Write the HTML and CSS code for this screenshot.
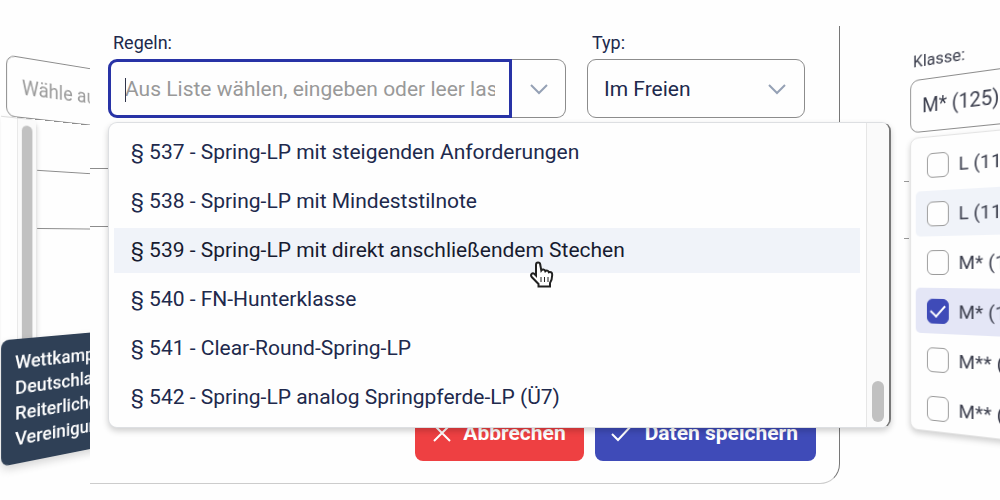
FILE: index.html
```
<!DOCTYPE html>
<html lang="de">
<head>
<meta charset="utf-8">
<title>Prüfung bearbeiten</title>
<link rel="stylesheet" href="styles.css">
</head>
<body>
<main class="stage">
  <section class="side side-left" aria-label="Veranstaltung">
    <div class="plane plane-left">
      <input class="side-field field-list" type="text" placeholder="Wähle aus Liste" aria-label="Veranstaltung">
      <div class="rows-left">
        <div class="list-edge"><div class="edge-track"><div class="edge-thumb"></div></div></div>
        <div class="ruled"></div>
      </div>
      <div class="tooltip" role="tooltip">Wettkampf<br>Deutschland<br>Reiterliche<br>Vereinigung</div>
    </div>
  </section>

  <section class="center">
    <form class="dialog">
      <div class="fields">
        <div class="field">
          <label for="rules">Regeln:</label>
          <div class="combo">
            <input id="rules" class="combo-input" type="text" placeholder="Aus Liste wählen, eingeben oder leer lassen">
            <span class="caret"></span>
            <button class="combo-button" type="button" aria-label="Liste öffnen">
              <svg class="chevron" viewBox="0 0 20 20"><path d="M2 6l8 8 8-8"/></svg>
            </button>
          </div>
        </div>
        <div class="field">
          <label for="type">Typ:</label>
          <div class="select-wrap">
            <select id="type"><option>Im Freien</option><option>Halle</option></select>
            <svg class="chevron select-chevron" viewBox="0 0 20 20"><path d="M2 6l8 8 8-8"/></svg>
          </div>
        </div>
        <div class="menu">
          <ul class="options" role="listbox" aria-label="Regeln">
            <li role="option">§ 537 - Spring-LP mit steigenden Anforderungen</li>
            <li role="option">§ 538 - Spring-LP mit Mindeststilnote</li>
            <li role="option" class="hover">§ 539 - Spring-LP mit direkt anschließendem Stechen</li>
            <li role="option">§ 540 - FN-Hunterklasse</li>
            <li role="option">§ 541 - Clear-Round-Spring-LP</li>
            <li role="option">§ 542 - Spring-LP analog Springpferde-LP (Ü7)</li>
          </ul>
          <div class="track"><div class="thumb"></div></div>
          <svg class="pointer" viewBox="0 0 26 28"><path d="M7 14.500V4c0-3.200 4-3.200 4.300 0l1 5.500c1-1.500 3.300-1.200 4 .7 1.200-1.200 3-.7 3.500 1 2-.8 3.500.3 3.400 2.800-.1 4-.7 6-2.200 8v3.500H9.500V23L3.200 16.500C.5 13.500 3.500 11.300 5.500 13z"/><path class="lines" d="M12 16v5M15.500 16v5M19 16v5"/></svg>
        </div>
      </div>
      <div class="ruled"></div>
      <div class="actions">
        <button class="btn cancel" type="button"><svg viewBox="0 0 18 18"><path d="M1 1l16 16M17 1L1 17"/></svg>Abbrechen</button>
        <button class="btn save" type="button"><svg class="wide" viewBox="0 0 22 20"><path d="M1 11l6 6L21 2"/></svg>Daten speichern</button>
      </div>
    </form>
  </section>

  <section class="side side-right" aria-label="Klasse">
    <div class="plane plane-right">
      <label class="side-label" for="class">Klasse:</label>
      <input id="class" class="side-field class-field" type="text" value="M* (125)">
      <div class="checks">
        <label><input type="checkbox">L (115)</label>
        <label class="hover"><input type="checkbox">L (115)</label>
        <label><input type="checkbox">M* (125)</label>
        <label class="picked"><input type="checkbox" checked>M* (125)</label>
        <label><input type="checkbox">M** (135)</label>
        <label><input type="checkbox">M** (135)</label>
      </div>
    </div>
  </section>
</main>
</body>
</html>
```
FILE: styles.css
```
* { box-sizing: border-box; }

body {
  margin: 0;
  background: #fefefe;
  color: #20294c;
  font-family: Roboto, "Liberation Sans", sans-serif;
  font-size: 21px;
  overflow: hidden;
}

input, select, button { font: inherit; color: inherit; margin: 0; }

.stage {
  display: grid;
  grid-template-columns: 90px minmax(0, 1fr) 96px;
  min-height: 100vh;
}

/* side panels turned away in perspective */
.side { overflow: hidden; perspective: 400px; perspective-origin: 40px 240px; }
.side-right { perspective-origin: 40px 270px; }
.plane { position: relative; width: 160px; height: 100%; transform-origin: 40px 240px; }
.plane-left { transform: rotateY(20deg); padding: 60px 0 0 5px; }
.plane-right {
  transform: rotateY(-16deg);
  transform-origin: 40px 270px;
  padding: 44px 0 0 4px;
  color: #3a3d4c;
}

.side-field {
  display: block;
  width: 100%;
  height: 60px;
  padding: 0 15px;
  background: #fefefe;
  border: 1px solid #8c8c8c;
  border-radius: 9px;
  font-size: 20px;
}
.side-field::placeholder { color: #9b9b9b; opacity: 1; }

.rows-left { display: flex; height: 260px; margin-left: -5px; }
.list-edge {
  width: 37px;
  border-top: 1px solid #dddddd;
  border-right: 1px solid #e2e2e2;
  border-top-right-radius: 8px;
  box-shadow: 1px 2px 4px #00000018;
  display: flex;
  justify-content: flex-end;
}
.edge-track { width: 20px; border-left: 1px solid #e8e8e8; background: #fafafa; padding: 6px 4px 0; }
.edge-thumb { height: 100%; border-radius: 6px; background: #c1c1c1; }

.ruled {
  flex: 1;
  height: 59px;
  margin-top: 50px;
  border-top: 1px solid #8c8c8c;
  border-bottom: 1px solid #8c8c8c;
}

.tooltip {
  position: absolute;
  top: 337px;
  left: 0;
  width: 100%;
  padding: 10px 14px 12px;
  border-radius: 8px;
  background: #2f4056;
  color: #ffffff;
  font-size: 19px;
  font-weight: 500;
  line-height: 25px;
  box-shadow: 0 4px 8px #00000028;
}

.center { min-width: 0; }
.dialog {
  display: flex;
  flex-direction: column;
  margin: 26px 64px 0 0;
  padding-bottom: 22px;
  border: solid #777777;
  border-width: 0 1px 1px 0;
  border-bottom-color: #cccccc;
  border-bottom-right-radius: 20px;
}
.fields {
  position: relative;
  display: grid;
  grid-template-columns: minmax(0, 458px) minmax(0, 218px);
  justify-content: space-between;
  padding: 4px 34px 0 18px;
}
.field { display: flex; flex-direction: column; gap: 4px; }
.field label { font-size: 18px; line-height: 25px; padding-left: 5px; }

.combo { position: relative; display: flex; height: 59px; }
.combo-input {
  flex: 1;
  min-width: 0;
  padding: 0 14px;
  border: 3px solid #2833a6;
  border-radius: 9px 0 0 9px;
  background: #fefefe;
  outline: 0;
}
.combo-input::placeholder { color: #999999; opacity: 1; }
.caret { position: absolute; left: 17px; top: 19px; width: 1px; height: 24px; background: #30344a; }
.combo-button {
  display: grid;
  place-items: center;
  width: 54px;
  padding: 0;
  background: #fefefe;
  border: 1px solid #8c8c8c;
  border-left: 0;
  border-radius: 0 9px 9px 0;
}
.chevron { width: 20px; height: 20px; fill: none; stroke: #95a1b5; stroke-width: 2; }

.select-wrap { position: relative; }
select {
  display: block;
  width: 100%;
  height: 59px;
  padding: 0 50px 0 16px;
  appearance: none;
  background: #fefefe;
  border: 1px solid #8c8c8c;
  border-radius: 9px;
}
.select-chevron { position: absolute; right: 18px; top: 20px; pointer-events: none; }

.menu {
  position: absolute;
  z-index: 2;
  top: calc(100% + 4px);
  left: 18px;
  right: -52px;
  display: flex;
  background: #fefefe;
  border: 1px solid #dddfe2;
  border-right: 2px solid #777777;
  border-radius: 9px;
  box-shadow: 0 3px 6px #00000030;
}
.options {
  flex: 1;
  display: flex;
  flex-direction: column;
  gap: 4px;
  margin: 0;
  padding: 7px 6px 7px 5px;
  list-style: none;
}
.options li { padding: 0 17px; line-height: 45px; white-space: nowrap; }
.options .hover { background: #f0f3f9; color: #171b30; }
.track {
  display: flex;
  align-items: flex-end;
  width: 23px;
  padding: 5px;
  background: #fafafa;
  border-left: 1px solid #e6e6e6;
  border-radius: 0 8px 8px 0;
}
.thumb { width: 12px; height: 41px; border-radius: 6px; background: #c1c1c1; }
.pointer {
  position: absolute;
  left: 420px;
  top: 138px;
  width: 26px;
  height: 28px;
  fill: #ffffff;
  stroke: #222222;
  stroke-width: 2;
}
.pointer .lines { stroke-width: 1; }

.dialog > .ruled { flex: none; }
.actions {
  display: flex;
  justify-content: flex-end;
  gap: 11px;
  margin-top: 178px;
  padding-right: 23px;
}
.btn {
  display: flex;
  align-items: center;
  gap: 12px;
  height: 56px;
  padding: 0 18px;
  border: 0;
  border-radius: 8px;
  color: #ffffff;
  font-weight: 700;
}
.btn svg { width: 18px; height: 18px; fill: none; stroke: #ffffff; stroke-width: 2; }
.btn .wide { width: 22px; height: 20px; }
.cancel { background: #ee4042; }
.save { background: #3f4bb8; padding-left: 16px; }

/* table rules that show beside the class list */
.side-right { position: relative; }
.side-right::before {
  content: "";
  position: absolute;
  top: 181px;
  left: 0;
  width: 5px;
  height: 56px;
  border: solid #999999;
  border-width: 1px 0;
}
.side-label { display: block; padding-left: 3px; font-size: 17px; line-height: 26px; }
.class-field { height: 54px; margin-top: 6px; padding: 0 12px; }
.checks {
  display: flex;
  flex-direction: column;
  gap: 3px;
  margin-top: 5px;
  padding: 5px 5px 0;
  background: #fefefe;
  border: 1px solid #e4e4e4;
  border-radius: 8px;
  box-shadow: 0 3px 6px #00000030;
}
.checks label {
  display: flex;
  align-items: center;
  gap: 10px;
  height: 46px;
  padding-left: 12px;
  border-radius: 5px;
  font-size: 19px;
  white-space: nowrap;
}
.checks .hover { background: #f0f3f9; }
.checks .picked { background: #e4e6f6; }
.checks input {
  appearance: none;
  display: grid;
  place-items: center;
  width: 23px;
  height: 25px;
  border: 1px solid #999999;
  border-radius: 6px;
  background: #fefefe;
}
.checks input:checked { background: #3f4bb8; border-color: #3f4bb8; }
.checks input:checked::before {
  content: "";
  width: 7px;
  height: 13px;
  margin-bottom: 4px;
  border: solid #ffffff;
  border-width: 0 2px 2px 0;
  transform: rotate(42deg);
}
```
